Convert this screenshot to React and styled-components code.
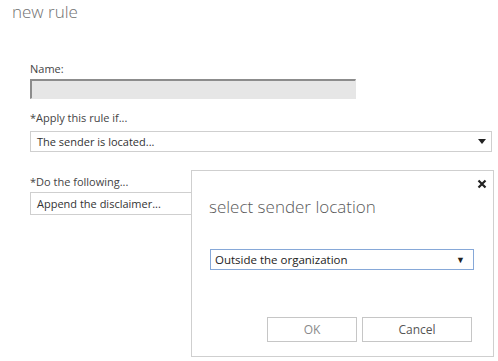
import React from "react";
import styled, { createGlobalStyle } from "styled-components";

const GlobalStyle = createGlobalStyle`
    html, body {
        margin: 0;
        padding: 0;
        background: #ffffff;
    }
    body {
        font-family: "Open Sans", "Liberation Sans", sans-serif;
        color: #333333;
    }
`;

const Page = styled.div`
    position: relative;
    width: 498px;
    height: 361px;
    overflow: hidden;
    background: #ffffff;
`;

const Title = styled.h1`
    margin: 0;
    padding: 0 0 0 12px;
    font-size: 17px;
    line-height: 24px;
    font-weight: 300;
    color: #707070;
`;

const Form = styled.div`
    display: flex;
    flex-direction: column;
    padding: 37px 6px 0 30px;
`;

const Field = styled.div`
    display: flex;
    flex-direction: column;
    margin-bottom: ${({ gap }) => gap || "0px"};
`;

const Label = styled.label`
    font-size: 11px;
    line-height: 16px;
    color: #444444;
    margin-bottom: ${({ space }) => space || "3px"};
`;

const NameInput = styled.div`
    box-sizing: border-box;
    width: 326px;
    height: 20px;
    background: #e6e6e6;
    border-top: 2px solid #8c8c8c;
    border-left: 2px solid #8c8c8c;
    border-right: 1px solid #e6e6e6;
    border-bottom: 1px solid #e6e6e6;
`;

const Dropdown = styled.div`
    box-sizing: border-box;
    display: flex;
    align-items: center;
    justify-content: space-between;
    width: 462px;
    height: ${({ h }) => h || "21px"};
    padding: 0 5px 0 6px;
    border: 1px solid #cfcfcf;
    font-size: 11px;
    color: #333333;
`;

const Caret = styled.span`
    display: inline-block;
    width: 0;
    height: 0;
    border-left: 4px solid transparent;
    border-right: 4px solid transparent;
    border-top: 5px solid #222222;
`;

const Dialog = styled.div`
    position: absolute;
    left: 191px;
    top: 170px;
    box-sizing: border-box;
    width: 303px;
    height: 187px;
    background: #ffffff;
    border: 1px solid #cfcfcf;
    display: flex;
    flex-direction: column;
    padding: 0 20px 0 17px;
`;

const CloseRow = styled.div`
    display: flex;
    justify-content: flex-end;
    height: 18px;
    align-items: flex-end;
    margin-right: -14px;
`;

const DialogTitle = styled.h2`
    margin: 6px 0 0 0;
    font-size: 17px;
    line-height: 24px;
    font-weight: 300;
    color: #5a5a5a;
`;

const Select = styled.div`
    box-sizing: border-box;
    display: flex;
    align-items: center;
    justify-content: space-between;
    margin: 30px 0 0 1px;
    width: 264px;
    height: 21px;
    padding: 0 8px 0 4px;
    border: 1px solid #86a8d8;
    font-size: 11.5px;
    color: #222222;
`;

const SmallCaret = styled.span`
    font-size: 9px;
    color: #222222;
`;

const Buttons = styled.div`
    display: flex;
    justify-content: flex-end;
    gap: 5px;
    margin-top: 47px;
    margin-right: 1px;
`;

const Button = styled.button`
    box-sizing: border-box;
    width: ${({ w }) => w};
    height: 25px;
    background: #ffffff;
    border: 1px solid #c6c6c6;
    font-family: "Open Sans", "Liberation Sans", sans-serif;
    font-size: 12px;
    color: ${({ muted }) => (muted ? "#8a8a8a" : "#555555")};
    padding: 0;
`;

const CloseIcon = () => (
    <svg width="10" height="10" viewBox="0 0 10 10">
        <path d="M1.5 1.5 L8.5 8.5 M8.5 1.5 L1.5 8.5" stroke="#222" strokeWidth="2.2" strokeLinecap="butt" />
    </svg>
);

export default function App() {
    return (
        <Page>
            <GlobalStyle />
            <Title>new rule</Title>
            <Form>
                <Field gap="11px">
                    <Label space="2px">Name:</Label>
                    <NameInput />
                </Field>
                <Field gap="22px">
                    <Label space="5px">*Apply this rule if...</Label>
                    <Dropdown>
                        <span>The sender is located...</span>
                        <Caret />
                    </Dropdown>
                </Field>
                <Field>
                    <Label space="2px">*Do the following...</Label>
                    <Dropdown h="23px">
                        <span>Append the disclaimer...</span>
                        <Caret />
                    </Dropdown>
                </Field>
            </Form>
            <Dialog>
                <CloseRow>
                    <CloseIcon />
                </CloseRow>
                <DialogTitle>select sender location</DialogTitle>
                <Select>
                    <span>Outside the organization</span>
                    <SmallCaret>▼</SmallCaret>
                </Select>
                <Buttons>
                    <Button w="90px" muted>OK</Button>
                    <Button w="110px">Cancel</Button>
                </Buttons>
            </Dialog>
        </Page>
    );
}
